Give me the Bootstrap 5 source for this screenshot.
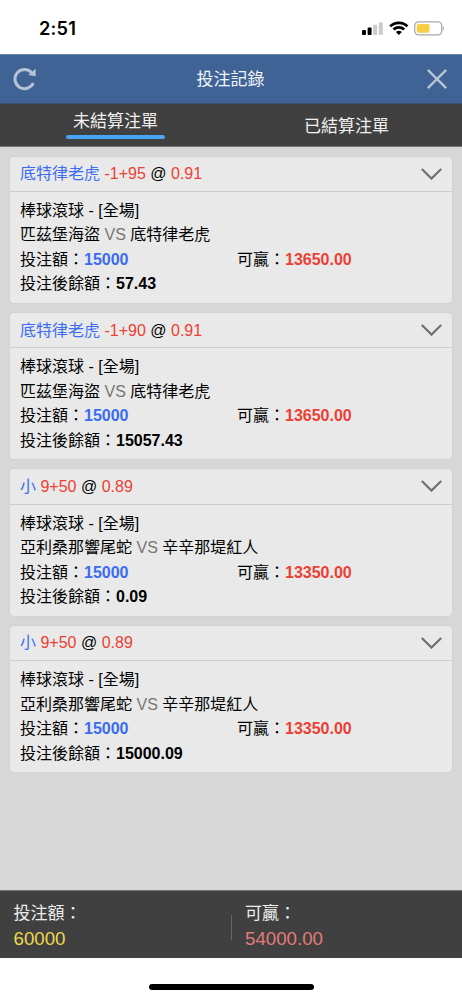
<!DOCTYPE html>
<html lang="zh-TW">
<head>
<meta charset="utf-8">
<meta name="viewport" content="width=device-width, initial-scale=1">
<title>投注記錄</title>
<link href="https://cdn.jsdelivr.net/npm/bootstrap@5.3.0/dist/css/bootstrap.min.css" rel="stylesheet">
<style>
body{font-family:"Liberation Sans","Noto Sans CJK TC",sans-serif;background:#fff;color:#000;height:1000px;overflow:hidden}
svg{display:block;flex:none}
.statusbar{height:54px;padding:3px 18px 0 39px}
.clock{font-family:Inter,"Liberation Sans",sans-serif;font-weight:600;font-size:18.2px;letter-spacing:.2px;line-height:1}
.titlebar{height:49.5px;background:#406396;border-top:1px solid #6a86ad;border-bottom:1px solid #395273;padding:0 14px 0 12px;color:#f1f4f8;font-size:17px}
.titlebar span{padding:2px 2px 0 0}
.tabs{height:43px;background:#404040;border-bottom:1px solid #777;font-size:17px;color:#f0f0f0;line-height:25px}
.tabs .tab-on{padding-top:5px}
.tabs .tab-off{padding-top:10px}
.tab-line{width:99px;height:4px;border-radius:2px;background:#48a5f5;margin-top:1.5px}
.bets{background:#d7d7d7;padding:10px 10px 0;gap:10px}
.bet{height:146.4px;background:#e9e9e9;border:0;border-radius:4px;box-shadow:0 0 2px #c8c8c8;font-size:16px;color:#000}
.bet .card-header{height:35.4px;background:none;border-bottom:1.5px solid #cdcdcd;padding:0 10px}
.bet .card-header div{padding-top:1px}
.bet .card-body{padding:7px 10px 0;line-height:24.5px}
.c-blue{color:#3a6cf0}.c-red{color:#eb4034}.c-vs{color:#777}
.amount{width:217px}
.totals{height:68px;background:#404040;border-top:1px solid #777;font-size:17px;line-height:25px;color:#eee}
.totals .total{padding:10px 0 0 13.5px;width:231.5px}
.totals .num{font-size:18.7px}
.c-yellow{color:#f0d74c}.c-pink{color:#e57b77}
.divider{width:1px;height:25px;background:#666;margin-top:5px}
.homebar{height:42px;padding-top:26px}
.homebar div{width:165px;height:6px;border-radius:3px;background:#000}
</style>
</head>
<body class="d-flex flex-column">
<header class="statusbar d-flex align-items-center justify-content-between">
  <span class="clock">2:51</span>
  <svg width="83" height="16" viewBox="0 0 83 16">
    <rect x="1" y="9" width="4" height="5" rx="1"/><rect x="6.6" y="6.4" width="4" height="7.6" rx="1"/>
    <rect x="12.2" y="3.7" width="4" height="10.3" rx="1" fill="#ccc"/><rect x="17.8" y="1.2" width="4" height="12.8" rx="1" fill="#ccc"/>
    <g transform="translate(0 -.8)"><g fill="none" stroke="#000" stroke-width="2.7"><path d="M29.2 6.2c4.7-4.6 12.6-4.6 17.3 0"/><path d="M32.5 9.3c2.9-2.8 7.8-2.8 10.7 0"/></g>
    <path d="M34.9 11.7c1.7-1.5 4.2-1.5 5.9 0l-2.95 3z"/></g>
    <g transform="translate(0 -.8)"><rect x="53.7" y="1.7" width="27" height="13" rx="3.8" fill="none" stroke="#aaa" stroke-width="1.3"/>
    <rect x="55.8" y="3.8" width="12.7" height="8.8" rx="1.8" fill="#f7ce46"/>
    <path d="M81.8 6.1c1.5.5 1.5 3.7 0 4.2z" fill="#aaa"/></g>
  </svg>
</header>
<nav class="titlebar d-flex align-items-center justify-content-between">
  <svg width="25" height="26" viewBox="0 0 25 26" fill="none" stroke="#b6c4d8" stroke-width="3"><path d="M21.3 17A9.6 9.6 0 1 1 19.6 6.5"/><path d="M23.6 2.8v7.4l-7.4-1.2z" fill="#b6c4d8" stroke="none"/></svg>
  <span>投注記錄</span>
  <svg width="22" height="22" viewBox="0 0 22 22" stroke="#b6c4d8" stroke-width="2.4"><path d="M1.8 1.8l18.4 18.4M20.2 1.8L1.8 20.2"/></svg>
</nav>
<nav class="tabs d-flex">
  <div class="w-50 tab-on d-flex flex-column align-items-center">未結算注單<div class="tab-line"></div></div>
  <div class="w-50 tab-off text-center">已結算注單</div>
</nav>
<main class="bets d-flex flex-column flex-grow-1">
  <section class="card bet">
    <div class="card-header d-flex align-items-center justify-content-between"><div><span class="c-blue">底特律老虎</span> <span class="c-red">-1+95</span> @ <span class="c-red">0.91</span></div><svg width="21" height="12" viewBox="0 0 21 12" fill="none" stroke="#6e6e6e" stroke-width="2.1"><path d="M.8 1l9.7 9.6L20.2 1"/></svg></div>
    <div class="card-body"><div>棒球滾球 - [全場]</div><div>匹茲堡海盜 <span class="c-vs">VS</span> 底特律老虎</div>
    <div class="d-flex"><div class="amount">投注額：<b class="c-blue">15000</b></div><div>可贏：<b class="c-red">13650.00</b></div></div><div>投注後餘額：<b>57.43</b></div></div>
  </section>
  <section class="card bet">
    <div class="card-header d-flex align-items-center justify-content-between"><div><span class="c-blue">底特律老虎</span> <span class="c-red">-1+90</span> @ <span class="c-red">0.91</span></div><svg width="21" height="12" viewBox="0 0 21 12" fill="none" stroke="#6e6e6e" stroke-width="2.1"><path d="M.8 1l9.7 9.6L20.2 1"/></svg></div>
    <div class="card-body"><div>棒球滾球 - [全場]</div><div>匹茲堡海盜 <span class="c-vs">VS</span> 底特律老虎</div>
    <div class="d-flex"><div class="amount">投注額：<b class="c-blue">15000</b></div><div>可贏：<b class="c-red">13650.00</b></div></div><div>投注後餘額：<b>15057.43</b></div></div>
  </section>
  <section class="card bet">
    <div class="card-header d-flex align-items-center justify-content-between"><div><span class="c-blue">小</span> <span class="c-red">9+50</span> @ <span class="c-red">0.89</span></div><svg width="21" height="12" viewBox="0 0 21 12" fill="none" stroke="#6e6e6e" stroke-width="2.1"><path d="M.8 1l9.7 9.6L20.2 1"/></svg></div>
    <div class="card-body"><div>棒球滾球 - [全場]</div><div>亞利桑那響尾蛇 <span class="c-vs">VS</span> 辛辛那堤紅人</div>
    <div class="d-flex"><div class="amount">投注額：<b class="c-blue">15000</b></div><div>可贏：<b class="c-red">13350.00</b></div></div><div>投注後餘額：<b>0.09</b></div></div>
  </section>
  <section class="card bet">
    <div class="card-header d-flex align-items-center justify-content-between"><div><span class="c-blue">小</span> <span class="c-red">9+50</span> @ <span class="c-red">0.89</span></div><svg width="21" height="12" viewBox="0 0 21 12" fill="none" stroke="#6e6e6e" stroke-width="2.1"><path d="M.8 1l9.7 9.6L20.2 1"/></svg></div>
    <div class="card-body"><div>棒球滾球 - [全場]</div><div>亞利桑那響尾蛇 <span class="c-vs">VS</span> 辛辛那堤紅人</div>
    <div class="d-flex"><div class="amount">投注額：<b class="c-blue">15000</b></div><div>可贏：<b class="c-red">13350.00</b></div></div><div>投注後餘額：<b>15000.09</b></div></div>
  </section>
</main>
<footer class="totals d-flex">
  <div class="total">投注額：<div class="num c-yellow">60000</div></div>
  <div class="divider align-self-center"></div>
  <div class="total">可贏：<div class="num c-pink">54000.00</div></div>
</footer>
<div class="homebar d-flex justify-content-center"><div></div></div>
<script src="https://cdn.jsdelivr.net/npm/bootstrap@5.3.0/dist/js/bootstrap.bundle.min.js"></script>
</body>
</html>
